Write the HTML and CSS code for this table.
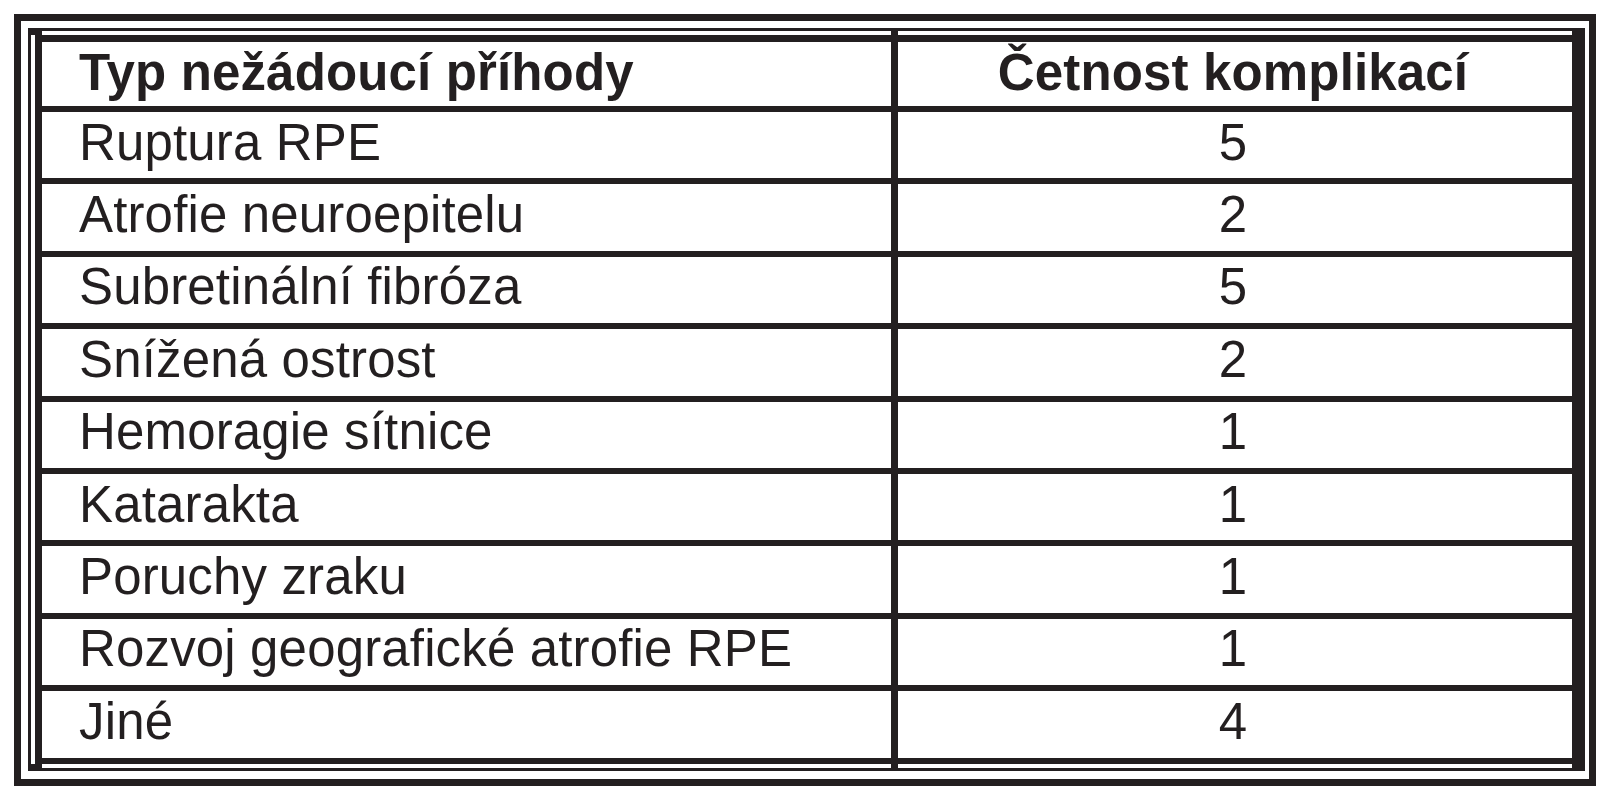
FILE: index.html
```html
<!DOCTYPE html>
<html lang="cs">
<head>
<meta charset="utf-8">
<title>Typ nežádoucí příhody</title>
<link rel="stylesheet" href="styles.css">
</head>
<body>
<div class="frame">
  <div class="inner">
    <div class="gutter"><span class="dot"></span><span class="dot"></span></div>
    <div class="col col-type">
      <div class="sheet">
        <div class="cell head">Typ nežádoucí příhody</div>
        <div class="cell">Ruptura RPE</div>
        <div class="cell">Atrofie neuroepitelu</div>
        <div class="cell">Subretinální fibróza</div>
        <div class="cell">Snížená ostrost</div>
        <div class="cell">Hemoragie sítnice</div>
        <div class="cell">Katarakta</div>
        <div class="cell">Poruchy zraku</div>
        <div class="cell">Rozvoj geografické atrofie RPE</div>
        <div class="cell">Jiné</div>
      </div>
    </div>
    <div class="col col-count">
      <div class="sheet">
        <div class="cell head">Četnost komplikací</div>
        <div class="cell">5</div>
        <div class="cell">2</div>
        <div class="cell">5</div>
        <div class="cell">2</div>
        <div class="cell">1</div>
        <div class="cell">1</div>
        <div class="cell">1</div>
        <div class="cell">1</div>
        <div class="cell">4</div>
      </div>
    </div>
  </div>
</div>
</body>
</html>
```
FILE: styles.css
```css
html, body {
  margin: 0;
  background: #ffffff;
}
body {
  font-family: "Liberation Sans", Arial, sans-serif;
  color: #231f20;
}
.frame {
  margin: 14px 0 0 14px;
  width: 1582px;
  box-sizing: border-box;
  border: 7px solid #231f20;
  padding: 7px 4px 8px 7px;
}
.inner {
  display: flex;
  border-style: solid;
  border-color: #231f20;
  border-width: 3px 13px 3px 3px;
}
.gutter {
  width: 4px;
  display: flex;
  flex-direction: column;
  justify-content: space-between;
}
.dot {
  display: block;
  height: 4px;
  background: #231f20;
}
.col {
  padding: 4px 0;
}
.col-type {
  width: 849px;
  border-left: 7px solid #231f20;
  border-right: 7px solid #231f20;
}
.col-count {
  flex: 1;
}
.sheet {
  border-top: 7px solid #231f20;
  border-bottom: 6px solid #231f20;
}
.cell {
  box-sizing: border-box;
  height: 72.4px;
  border-top: 6px solid #231f20;
  display: flex;
  align-items: center;
  padding: 0 0 6px 37px;
  font-size: 51px;
  letter-spacing: 0.15px;
  white-space: nowrap;
}
.cell.head {
  height: 64px;
  border-top: 0;
  padding-bottom: 3px;
  font-weight: 700;
}
.col-count .cell {
  justify-content: center;
  padding-left: 0;
  padding-right: 4px;
}
```
